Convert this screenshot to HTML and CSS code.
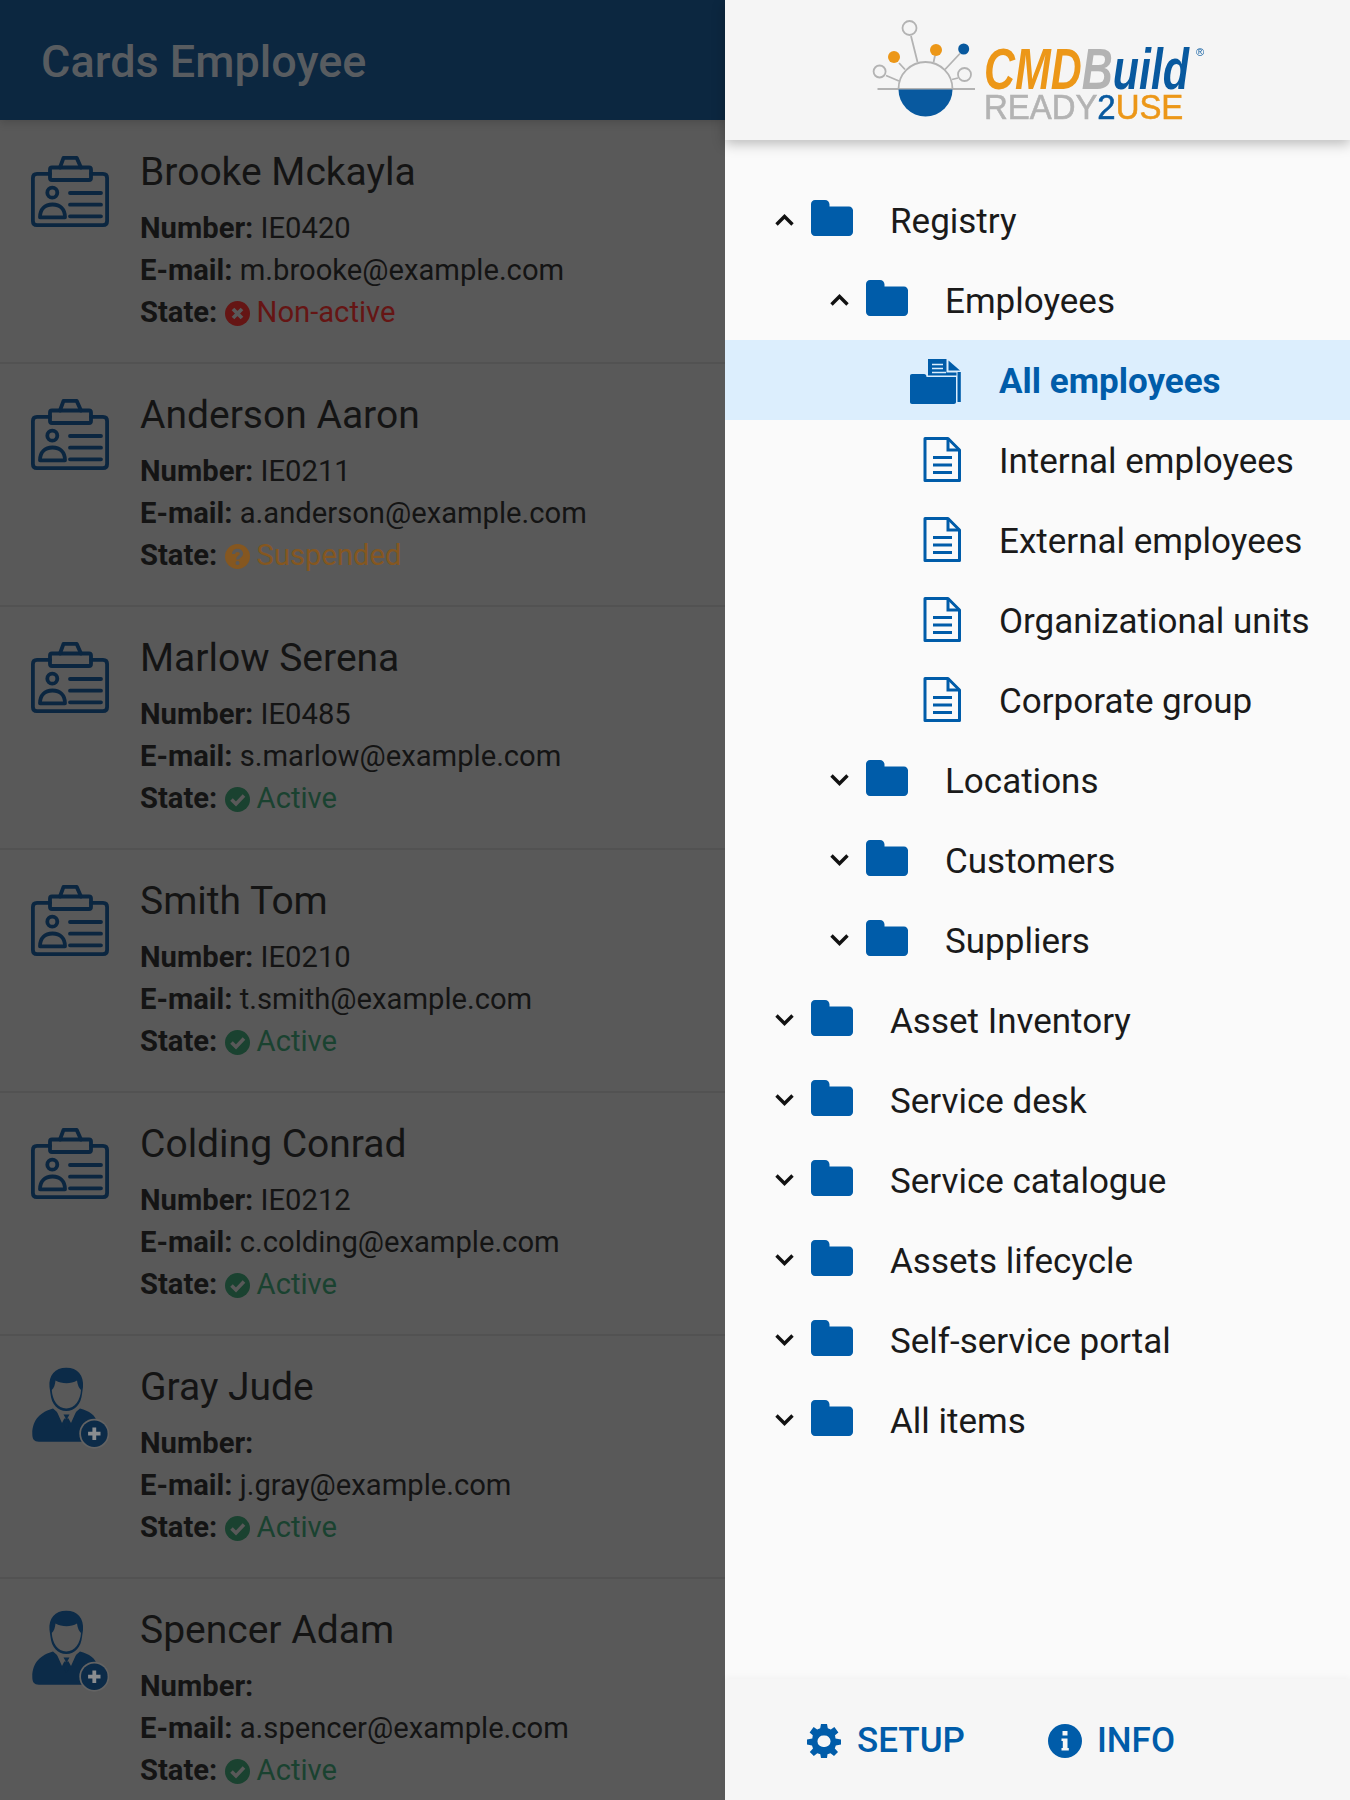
FILE: index.html
```html
<!DOCTYPE html>
<html lang="en">
<head>
    <meta charset="UTF-8">
    <meta name="viewport" content="width=device-width, initial-scale=1.0">
    <title>Cards Employee</title>
    <link rel="stylesheet" href="styles.css">
</head>
<body>
    <svg class="defs" width="0" height="0">
        <symbol id="i-badge" viewBox="0 0 78 71">
            <g fill="none" stroke="currentColor" stroke-width="3.8" stroke-linejoin="round" stroke-linecap="round">
                <path d="M19 17.800H6Q1.900 17.800 1.900 22V65Q1.900 69.100 6 69.100H72Q76.100 69.100 76.100 65V22Q76.100 17.800 72 17.800H60"/>
                <rect x="19" y="11.500" width="41" height="12.500" rx="2"/>
                <path d="M29 11.500L32.500 1.900H45.700L50 11.500"/>
                <circle cx="21.300" cy="36.700" r="5"/>
                <path d="M9 61.300C9 53 14 48.500 21.500 48.500S34 53 34 61.300Z"/>
                <path d="M39 37H70M39 48.700H70M39 60.300H70"/>
            </g>
        </symbol>
        <symbol id="i-person" viewBox="0 0 78 84">
            <path fill="currentColor" d="M18.500 20C17.500 8 24 .7 35.300 .7S53 8 52 20L51 27C50 37 44 44 35.300 44S20.500 37 19.500 27Z"/>
            <path fill="#595959" d="M20.800 23C23 21 24 18 24.500 13.500C31 17 40 17 46 13.500C46.500 18 48 21 50 23C49.500 33 44 41.500 35.300 41.500S21.300 33 20.800 23Z"/>
            <path fill="currentColor" d="M22 41.500L35.300 53L49 41.500C58 44 65 48 66 56V74.700H8C3 74.700 1.300 72 1.300 67C1.300 52 10 45 22 41.500Z"/>
            <path fill="#595959" d="M24.500 41.500L31 56L35.300 47.500L40 56L46.500 41.500L41 46H30Z"/>
            <path fill="currentColor" d="M32.500 47.500H38.500L36.500 51L38 59L35.300 63L33 59L34.500 51Z"/>
            <circle cx="63.300" cy="66.700" r="15" fill="#636363"/>
            <circle cx="63.300" cy="66.700" r="13.300" fill="currentColor"/>
            <path stroke="#8a8d90" stroke-width="3.800" d="M63.300 60.500V72.900M57.100 66.700H69.500"/>
        </symbol>
        <symbol id="i-folder" viewBox="0 0 42 36">
            <path fill="currentColor" d="M4 0H14C16.500 0 18.500 2 18.500 4.500V6.500H38C40.200 6.500 42 8.300 42 10.500V32C42 34.200 40.200 36 38 36H4C1.800 36 0 34.200 0 32V4C0 1.800 1.800 0 4 0Z"/>
        </symbol>
        <symbol id="i-doc" viewBox="0 0 38 45">
            <path fill="none" stroke="currentColor" stroke-width="3" stroke-linejoin="round" d="M2 1.500H25L36.500 13V43.500H2Z"/>
            <path fill="none" stroke="currentColor" stroke-width="3" d="M25 1.500V13H36.500"/>
            <path stroke="currentColor" stroke-width="2.800" d="M10 20.500H29M10 28H29M10 35.500H29"/>
        </symbol>
        <symbol id="i-open" viewBox="0 0 51 45">
            <path fill="currentColor" d="M18 0H36.500V13.500H46.500V16.500H18Z"/>
            <path fill="currentColor" d="M38.500 1.500L50 11.500H38.500Z"/>
            <path stroke="#dceefd" stroke-width="1.400" d="M22 5.500H33M22 9.500H33M22 13.500H36"/>
            <path fill="currentColor" d="M47.500 13H50.800V43H47.500Z"/>
            <path fill="currentColor" d="M2 15H14C15.500 15 16.500 16 16.500 18H46V43C46 44.200 45.200 45 44 45H2C.8 45 0 44.200 0 43V17C0 15.800 .8 15 2 15Z"/>
        </symbol>
        <symbol id="i-up" viewBox="0 0 19 12">
            <path fill="none" stroke="currentColor" stroke-width="3.400" d="M1.500 10.500L9.500 2.500L17.500 10.500"/>
        </symbol>
        <symbol id="i-down" viewBox="0 0 19 12">
            <path fill="none" stroke="currentColor" stroke-width="3.400" d="M1.500 1.500L9.500 9.500L17.500 1.500"/>
        </symbol>
        <symbol id="i-ok" viewBox="0 0 25 25">
            <circle cx="12.500" cy="12.500" r="12.500" fill="currentColor"/>
            <path fill="none" stroke="#595959" stroke-width="3.600" d="M6.500 12.500L11 17L19 8.500"/>
        </symbol>
        <symbol id="i-no" viewBox="0 0 25 25">
            <circle cx="12.500" cy="12.500" r="12.500" fill="currentColor"/>
            <path fill="none" stroke="#595959" stroke-width="3.800" d="M8 8L17 17M17 8L8 17"/>
        </symbol>
        <symbol id="i-ask" viewBox="0 0 25 25">
            <circle cx="12.500" cy="12.500" r="12.500" fill="currentColor"/>
            <path fill="none" stroke="#595959" stroke-width="3.200" d="M8.500 10C8.500 7.500 10.500 6.300 12.500 6.300S16.500 7.500 16.500 9.800C16.500 12.500 12.500 12.500 12.500 15.500"/>
            <circle cx="12.500" cy="19" r="2" fill="#595959"/>
        </symbol>
        <symbol id="i-gear" viewBox="0 0 34 34">
            <path fill="currentColor" fill-rule="evenodd" d="M14 0H20L20.800 4.300L23.800 5.500L27.400 3L31.400 8.500L28 11.300L28.500 14.500L34 15.500V20.500L28.800 21.500L27.800 24.500L31 28L27 32L23.500 29.300L20.500 30.300L20 34H14L13.300 30.300L10.300 29.300L6.800 32L2.800 28L6 24.500L5 21.500L0 20.500V15.500L5.300 14.500L5.800 11.300L2.600 8.500L6.600 3L10.200 5.500L13.200 4.300ZM17 11.500A5.800 5.800 0 1 0 17 23A5.800 5.800 0 1 0 17 11.500Z"/>
        </symbol>
        <symbol id="i-info" viewBox="0 0 34 34">
            <path fill="currentColor" fill-rule="evenodd" d="M17 0A17 17 0 1 1 17 34A17 17 0 1 1 17 0ZM14.500 7V11.500H19.500V7ZM13.500 14.500V17H14.800V24H13.500V26.500H20.800V24H19.500V14.500Z"/>
        </symbol>
    </svg>

    <div class="page">
        <main class="cards">
            <header class="topbar">Cards Employee</header>
            <div class="card">
                <svg class="card-icon"><use href="#i-badge"/></svg>
                <div class="card-body">
                    <h2>Brooke Mckayla</h2>
                    <p><b>Number:</b> IE0420</p>
                    <p><b>E-mail:</b> m.brooke@example.com</p>
                    <p><b>State:</b> <span class="state non-active"><svg><use href="#i-no"/></svg>Non-active</span></p>
                </div>
            </div>
            <div class="card">
                <svg class="card-icon"><use href="#i-badge"/></svg>
                <div class="card-body">
                    <h2>Anderson Aaron</h2>
                    <p><b>Number:</b> IE0211</p>
                    <p><b>E-mail:</b> a.anderson@example.com</p>
                    <p><b>State:</b> <span class="state suspended"><svg><use href="#i-ask"/></svg>Suspended</span></p>
                </div>
            </div>
            <div class="card">
                <svg class="card-icon"><use href="#i-badge"/></svg>
                <div class="card-body">
                    <h2>Marlow Serena</h2>
                    <p><b>Number:</b> IE0485</p>
                    <p><b>E-mail:</b> s.marlow@example.com</p>
                    <p><b>State:</b> <span class="state active"><svg><use href="#i-ok"/></svg>Active</span></p>
                </div>
            </div>
            <div class="card">
                <svg class="card-icon"><use href="#i-badge"/></svg>
                <div class="card-body">
                    <h2>Smith Tom</h2>
                    <p><b>Number:</b> IE0210</p>
                    <p><b>E-mail:</b> t.smith@example.com</p>
                    <p><b>State:</b> <span class="state active"><svg><use href="#i-ok"/></svg>Active</span></p>
                </div>
            </div>
            <div class="card">
                <svg class="card-icon"><use href="#i-badge"/></svg>
                <div class="card-body">
                    <h2>Colding Conrad</h2>
                    <p><b>Number:</b> IE0212</p>
                    <p><b>E-mail:</b> c.colding@example.com</p>
                    <p><b>State:</b> <span class="state active"><svg><use href="#i-ok"/></svg>Active</span></p>
                </div>
            </div>
            <div class="card">
                <svg class="card-icon person"><use href="#i-person"/></svg>
                <div class="card-body">
                    <h2>Gray Jude</h2>
                    <p><b>Number:</b></p>
                    <p><b>E-mail:</b> j.gray@example.com</p>
                    <p><b>State:</b> <span class="state active"><svg><use href="#i-ok"/></svg>Active</span></p>
                </div>
            </div>
            <div class="card">
                <svg class="card-icon person"><use href="#i-person"/></svg>
                <div class="card-body">
                    <h2>Spencer Adam</h2>
                    <p><b>Number:</b></p>
                    <p><b>E-mail:</b> a.spencer@example.com</p>
                    <p><b>State:</b> <span class="state active"><svg><use href="#i-ok"/></svg>Active</span></p>
                </div>
            </div>
        </main>

        <aside class="drawer">
            <div class="drawer-head">
                <svg class="logo-mark" viewBox="0 0 100 102">
                    <g fill="none" stroke="#b3b3b3" stroke-width="1.800">
                        <path d="M37 18L43.500 44M25 45L31 51.500M61 37.500L59.500 44.500M86 35.500L71 51.500M84 60L78 61.500M12 57.500L25 63"/>
                        <path d="M24.500 71A27 27 0 0 1 78.500 71"/>
                        <path d="M3.500 71H101"/>
                        <circle cx="35.500" cy="10" r="7"/>
                        <circle cx="90.500" cy="56.500" r="6.500"/>
                        <circle cx="5.600" cy="53.500" r="6"/>
                    </g>
                    <circle cx="20" cy="39" r="6" fill="#ec9718"/>
                    <circle cx="62" cy="32" r="6" fill="#ec9718"/>
                    <circle cx="89.700" cy="31" r="5.500" fill="#08599f"/>
                    <path fill="#08599f" d="M24.500 71.500H78.500A27 27 0 0 1 24.500 71.500Z"/>
                </svg>
                <div class="logo-text">
                    <div class="logo-top"><span class="orange">CMD</span><span class="grey">B</span><span class="blue">uild</span></div>
                    <div class="logo-bottom"><span class="grey">READY</span><span class="blue">2</span><span class="orange">USE</span></div>
                    <span class="logo-reg">®</span>
                </div>
            </div>

            <nav class="tree">
                <div class="row"><svg class="chev"><use href="#i-up"/></svg><svg class="folder"><use href="#i-folder"/></svg>Registry</div>
                <div class="row lvl2"><svg class="chev"><use href="#i-up"/></svg><svg class="folder"><use href="#i-folder"/></svg>Employees</div>
                <div class="row leaf current"><svg class="open"><use href="#i-open"/></svg>All employees</div>
                <div class="row leaf"><svg class="doc"><use href="#i-doc"/></svg>Internal employees</div>
                <div class="row leaf"><svg class="doc"><use href="#i-doc"/></svg>External employees</div>
                <div class="row leaf"><svg class="doc"><use href="#i-doc"/></svg>Organizational units</div>
                <div class="row leaf"><svg class="doc"><use href="#i-doc"/></svg>Corporate group</div>
                <div class="row lvl2"><svg class="chev"><use href="#i-down"/></svg><svg class="folder"><use href="#i-folder"/></svg>Locations</div>
                <div class="row lvl2"><svg class="chev"><use href="#i-down"/></svg><svg class="folder"><use href="#i-folder"/></svg>Customers</div>
                <div class="row lvl2"><svg class="chev"><use href="#i-down"/></svg><svg class="folder"><use href="#i-folder"/></svg>Suppliers</div>
                <div class="row"><svg class="chev"><use href="#i-down"/></svg><svg class="folder"><use href="#i-folder"/></svg>Asset Inventory</div>
                <div class="row"><svg class="chev"><use href="#i-down"/></svg><svg class="folder"><use href="#i-folder"/></svg>Service desk</div>
                <div class="row"><svg class="chev"><use href="#i-down"/></svg><svg class="folder"><use href="#i-folder"/></svg>Service catalogue</div>
                <div class="row"><svg class="chev"><use href="#i-down"/></svg><svg class="folder"><use href="#i-folder"/></svg>Assets lifecycle</div>
                <div class="row"><svg class="chev"><use href="#i-down"/></svg><svg class="folder"><use href="#i-folder"/></svg>Self-service portal</div>
                <div class="row"><svg class="chev"><use href="#i-down"/></svg><svg class="folder"><use href="#i-folder"/></svg>All items</div>
            </nav>

            <div class="drawer-foot">
                <a class="foot-btn setup"><svg><use href="#i-gear"/></svg>SETUP</a>
                <a class="foot-btn info"><svg><use href="#i-info"/></svg>INFO</a>
            </div>
        </aside>
    </div>
</body>
</html>
```

FILE: styles.css
```css
body {
    margin: 0;
    font-family: Roboto, sans-serif;
    background-color: #595959;
}
.defs {
    position: absolute;
}
.page {
    display: grid;
    grid-template-columns: 725px 625px;
    height: 1800px;
    overflow: hidden;
}

/* left side, dimmed by the open menu */
.cards {
    overflow: hidden;
    height: 1800px;
}
.topbar {
    height: 120px;
    box-sizing: border-box;
    margin-bottom: 1px;
    padding-left: 41px;
    background-color: #0c2740;
    color: #585c60;
    font-size: 45px;
    font-weight: 500;
    line-height: 124px;
    box-shadow: 0 3px 8px rgba(0, 0, 0, 0.15);
    position: relative;
}
.card {
    display: flex;
    height: 243px;
    box-sizing: border-box;
    padding: 28px 0 0 31px;
    border-bottom: 2px solid #525252;
    color: #141414;
}
.card-icon {
    width: 78px;
    height: 71px;
    margin-top: 7px;
    color: #0b2640;
    flex-shrink: 0;
}
.card-icon.person {
    height: 84px;
    color: #0c2b48;
    margin-top: 3px;
}
.card-body {
    margin-left: 31px;
}
.card-body h2 {
    margin: 0 0 12px;
    font-size: 39px;
    font-weight: 400;
    line-height: 46px;
}
.card-body p {
    margin: 0;
    font-size: 29.2px;
    line-height: 42px;
}
.card-body b {
    font-weight: 700;
}
.state svg {
    width: 25px;
    height: 25px;
    margin: 0 7px 0 0;
    vertical-align: -4px;
}
.non-active {
    color: #651514;
}
.suspended {
    color: #855720;
}
.active {
    color: #1a4230;
}

/* menu */
.drawer {
    display: flex;
    flex-direction: column;
    height: 1800px;
    background-color: #fafafa;
}
.drawer-head {
    display: flex;
    height: 140px;
    flex-shrink: 0;
    padding-left: 149px;
    background-color: #f5f5f5;
    box-shadow: 0 4px 12px rgba(0, 0, 0, 0.25);
    position: relative;
}
.logo-mark {
    width: 100px;
    height: 102px;
    margin: 18px 10px 0 0;
    overflow: visible;
    filter: blur(0.4px);
}
.logo-text {
    width: 220px;
    padding-top: 46px;
    position: relative;
    font-family: "Liberation Sans", sans-serif;
    filter: blur(0.4px);
}
.logo-top {
    height: 45px;
    font-size: 58px;
    font-weight: 700;
    font-style: italic;
    line-height: 45px;
    white-space: nowrap;
    transform: scaleX(0.74);
    transform-origin: left;
}
.logo-bottom {
    font-size: 35px;
    line-height: 32px;
    white-space: nowrap;
    -webkit-text-stroke: 0.6px;
    transform: scaleX(0.94);
    transform-origin: left;
}
.logo-reg {
    position: absolute;
    top: 46px;
    right: 0;
    font-size: 11px;
    color: #08599f;
}
.orange {
    color: #ec9718;
}
.grey {
    color: #b3b3b3;
}
.blue {
    color: #08599f;
}
.tree {
    flex: 1;
    padding-top: 40px;
}
.row {
    display: flex;
    align-items: center;
    height: 80px;
    box-sizing: border-box;
    padding: 2px 0 0 50px;
    font-size: 35px;
    color: #1a1a1a;
}
.row.lvl2 {
    padding-left: 105px;
}
.row.leaf {
    padding-left: 185px;
}
.row.current {
    background-color: #dceefd;
    color: #005ca9;
    font-weight: 700;
}
.chev {
    width: 19px;
    height: 12px;
    margin-bottom: 2px;
    color: #111;
}
.folder {
    width: 42px;
    height: 36px;
    margin: 0 37px 7px 17px;
    color: #005ca9;
}
.doc {
    width: 38px;
    height: 45px;
    margin: 0 38px 4px 13px;
    color: #005ca9;
}
.open {
    width: 51px;
    height: 45px;
    margin: 0 38px 0 0;
    color: #005ca9;
}
.drawer-foot {
    display: flex;
    height: 121px;
    flex-shrink: 0;
    box-sizing: border-box;
    padding: 2px 0 0 82px;
    background-color: #f6f6f6;
    box-shadow: 0 -2px 6px rgba(0, 0, 0, 0.03);
    position: relative;
}
.foot-btn {
    display: flex;
    align-items: center;
    color: #005ca9;
    font-size: 35px;
    font-weight: 500;
}
.foot-btn svg {
    width: 34px;
    height: 34px;
    margin-right: 16px;
}
.foot-btn.info {
    margin-left: 83px;
}
.foot-btn.info svg {
    margin-right: 15px;
}
```
